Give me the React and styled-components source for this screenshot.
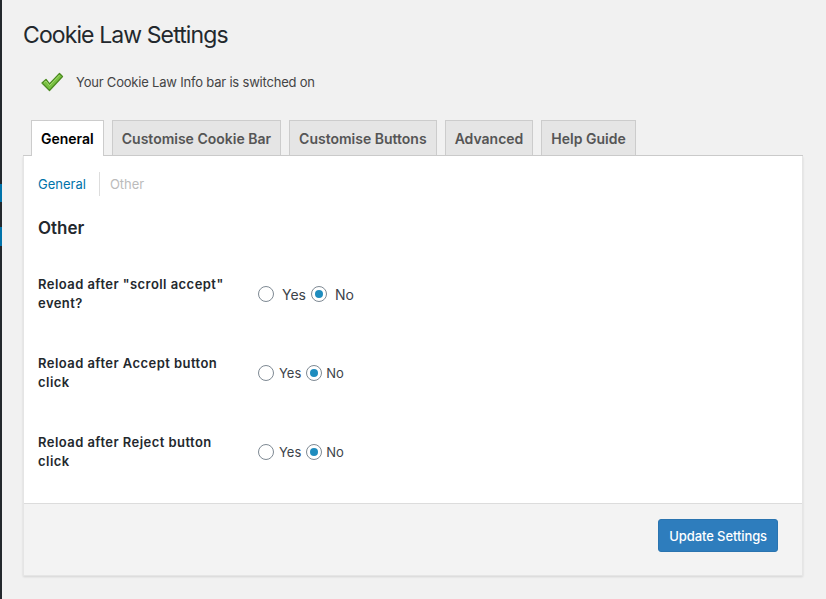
import React from "react";
import styled, { createGlobalStyle } from "styled-components";

const Global = createGlobalStyle`
  html, body { margin: 0; padding: 0; background: #f1f1f1; }
  body { font-family: Inter, "Liberation Sans", Arial, sans-serif; color: #444; font-size: 13px; }
`;

const Shell = styled.div`
  display: flex;
  min-height: 599px;
`;

const Sidebar = styled.div`
  width: 2px;
  background: #23282d;
  display: flex;
  flex-direction: column;
`;

const SideMark = styled.div`
  height: ${(p) => p.h}px;
  margin-top: ${(p) => p.top}px;
  background: #0073aa;
`;

const Content = styled.div`
  flex: 1;
  padding: 0 23px 0 21px;
`;

const Title = styled.h1`
  margin: 0;
  padding: 21px 0 0;
  font-size: 23px;
  font-weight: 400;
  letter-spacing: -0.9px;
  line-height: 29px;
  color: #23282d;
`;

const Notice = styled.div`
  display: flex;
  align-items: center;
  gap: 12px;
  margin: 21px 0 0 17px;
  height: 22px;
  color: #444;
  font-size: 13px;
  letter-spacing: -0.2px;
`;

const Tabs = styled.div`
  display: flex;
  gap: 8px;
  padding-left: 8px;
  margin-top: 27px;
  border-bottom: 1px solid #ccc;
  height: 35px;
`;

const Tab = styled.div`
  padding: 0 9px;
  display: flex;
  align-items: center;
  font-size: 14px;
  font-weight: 600;
  border: 1px solid #ccc;
  border-bottom: none;
  background: ${(p) => (p.active ? "#fff" : "#e5e5e5")};
  color: ${(p) => (p.active ? "#000" : "#555")};
  margin-bottom: ${(p) => (p.active ? "-1px" : "0")};
  height: ${(p) => (p.active ? "35px" : "34px")};
`;

const Panel = styled.div`
  background: #fff;
  border: 1px solid #e5e5e5;
  border-top: none;
  box-shadow: 0 1px 2px rgba(0, 0, 0, 0.12);
`;

const Body = styled.div`
  padding: 16px 14px 11px;
`;

const SubTabs = styled.div`
  display: flex;
  align-items: center;
  height: 24px;
`;

const SubTab = styled.span`
  font-size: 13px;
  color: ${(p) => (p.active ? "#0073aa" : "#bbb")};
  padding: ${(p) => (p.active ? "0 13px 0 0" : "0 0 0 10px")};
  border-right: ${(p) => (p.active ? "1px solid #ddd" : "none")};
  line-height: 24px;
`;

const Heading = styled.h3`
  margin: 20px 0 0;
  font-size: 17px;
  font-weight: 600;
  line-height: 24px;
  color: #23282d;
`;

const Row = styled.div`
  display: flex;
  align-items: center;
  padding: 20px 0 21px;
  margin-top: ${(p) => p.mt || 0}px;
`;

const Label = styled.div`
  width: 200px;
  margin-right: 20px;
  font-size: 13px;
  font-weight: 600;
  letter-spacing: 0.45px;
  line-height: 19px;
  color: #23282d;
`;

const Choices = styled.div`
  display: flex;
  align-items: center;
  font-size: ${(p) => p.size}px;
  color: #3c434a;
`;

const Radio = styled.span`
  width: 14px;
  height: 14px;
  border-radius: 50%;
  border: 1px solid #7e8993;
  background: #fff;
  display: inline-flex;
  align-items: center;
  justify-content: center;
  margin-right: ${(p) => p.mr}px;
  margin-left: ${(p) => p.ml || 0}px;
  &::after {
    content: "";
    width: 8px;
    height: 8px;
    border-radius: 50%;
    background: ${(p) => (p.checked ? "#1e8cbe" : "transparent")};
  }
`;

const Footer = styled.div`
  background: #f3f3f3;
  border-top: 1px solid #dcdcdc;
  display: flex;
  justify-content: flex-end;
  padding: 15px 24px 23px;
`;

const Button = styled.button`
  height: 33px;
  padding: 0 10px;
  background: #2e7dbd;
  border: 1px solid #2a74b0;
  border-radius: 3px;
  color: #fff;
  font-family: inherit;
  font-size: 13px;
  font-weight: 500;
  letter-spacing: -0.1px;
`;

const Check = () => (
  <svg width="24" height="22" viewBox="0 0 24 22">
    <path
      d="M2 12 L6 8.5 L9.5 13 L19.5 2.5 L22.5 5.5 L9.5 19.5 Z"
      fill="#79c142"
      stroke="#4b8a20"
      strokeWidth="1.3"
      strokeLinejoin="round"
    />
    <path d="M4 11.5 L6 10 L9.5 14.5 L19.5 4" fill="none" stroke="#a6dc6f" strokeWidth="1" />
  </svg>
);

const rows = [
  { label: 'Reload after "scroll accept" event?', size: 14, a: 8, b: 5, c: 8 },
  { label: "Reload after Accept button click", size: 13, a: 5, b: 5, c: 4 },
  { label: "Reload after Reject button click", size: 13, a: 5, b: 5, c: 4 },
];

export default function App() {
  return (
    <>
      <Global />
      <Shell>
        <Sidebar>
          <SideMark top={184} h={18} />
          <SideMark top={25} h={19} />
        </Sidebar>
        <Content>
          <Title>Cookie Law Settings</Title>
          <Notice>
            <Check />
            <span>Your Cookie Law Info bar is switched on</span>
          </Notice>
          <Tabs>
            <Tab active>General</Tab>
            <Tab>Customise Cookie Bar</Tab>
            <Tab>Customise Buttons</Tab>
            <Tab>Advanced</Tab>
            <Tab>Help Guide</Tab>
          </Tabs>
          <Panel>
            <Body>
              <SubTabs>
                <SubTab active>General</SubTab>
                <SubTab>Other</SubTab>
              </SubTabs>
              <Heading>Other</Heading>
              {rows.map((r, i) => (
                <Row key={i} mt={i === 0 ? 15 : 0}>
                  <Label>{r.label}</Label>
                  <Choices size={r.size}>
                    <Radio mr={r.a} />
                    Yes
                    <Radio checked ml={r.b} mr={r.c} />
                    No
                  </Choices>
                </Row>
              ))}
            </Body>
            <Footer>
              <Button>Update Settings</Button>
            </Footer>
          </Panel>
        </Content>
      </Shell>
    </>
  );
}
